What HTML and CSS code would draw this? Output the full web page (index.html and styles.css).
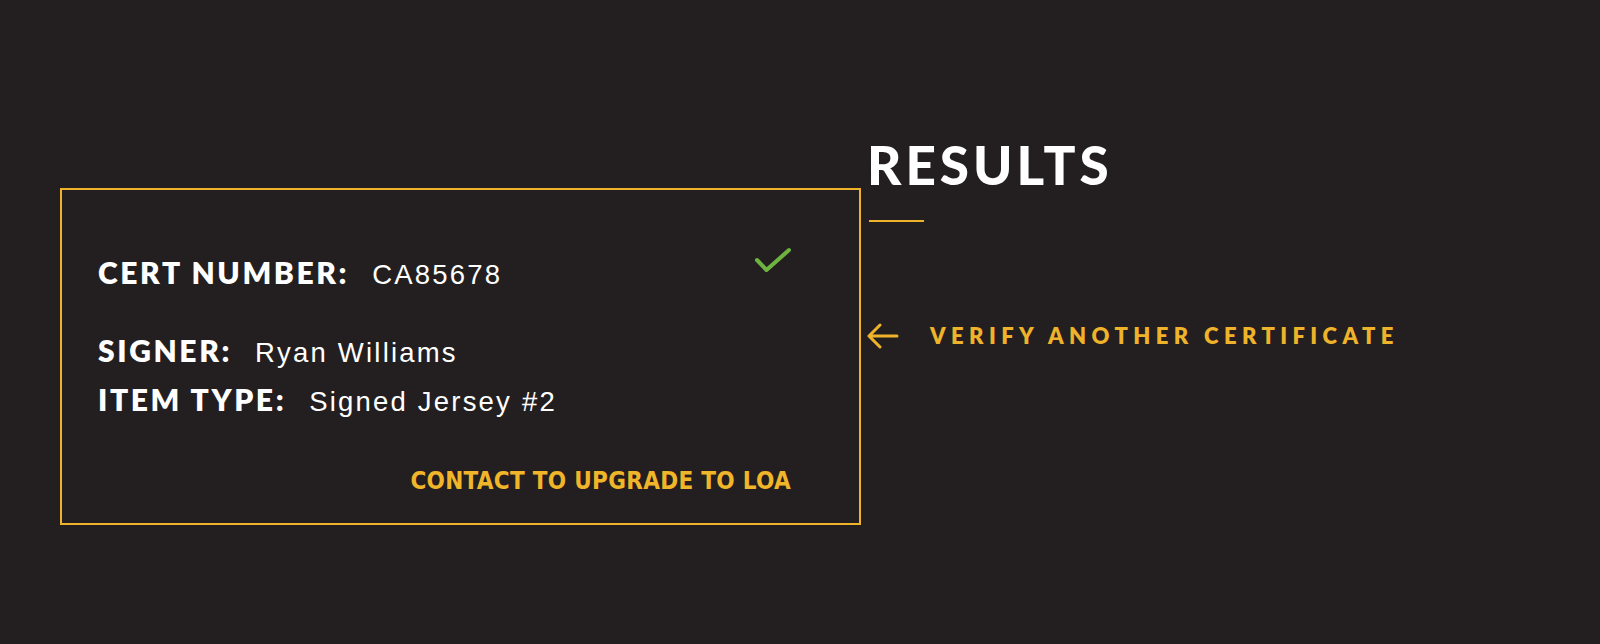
FILE: index.html
```html
<!DOCTYPE html>
<html lang="en">
<head>
<meta charset="utf-8">
<title>Results</title>
<link rel="stylesheet" href="styles.css">
</head>
<body>
<main class="page">
  <section class="card">
    <div class="row row-first">
      <div class="field">
        <span class="label">CERT NUMBER:</span>
        <span class="value">CA85678</span>
      </div>
      <svg class="check" width="38" height="28" viewBox="0 0 38 28" aria-hidden="true">
        <path d="M3 13 L12.5 23 L35 3" fill="none" stroke="#6db33f" stroke-width="4" stroke-linecap="round" stroke-linejoin="round"/>
      </svg>
    </div>
    <div class="row">
      <div class="field">
        <span class="label">SIGNER:</span>
        <span class="value">Ryan Williams</span>
      </div>
    </div>
    <div class="row">
      <div class="field">
        <span class="label">ITEM TYPE:</span>
        <span class="value">Signed Jersey #2</span>
      </div>
    </div>
    <div class="actions">
      <a class="contact" href="#">CONTACT TO UPGRADE TO LOA</a>
    </div>
  </section>
  <aside class="side">
    <h1 class="title">RESULTS</h1>
    <div class="rule"></div>
    <a class="back" href="#">
      <svg class="arrow" width="32" height="26" viewBox="0 0 32 26" aria-hidden="true">
        <path d="M30 13 H3 M13 2 L2 13 L13 24" fill="none" stroke="#eeb32b" stroke-width="3" stroke-linecap="round" stroke-linejoin="round"/>
      </svg>
      <span class="back-text">VERIFY ANOTHER CERTIFICATE</span>
    </a>
  </aside>
</main>
</body>
</html>
```

FILE: styles.css
```css
html, body {
  margin: 0;
  padding: 0;
}
body {
  background: #231f20;
  width: 1600px;
  height: 644px;
  overflow: hidden;
  font-family: "Liberation Sans", Arial, sans-serif;
  color: #ffffff;
}
.page {
  display: flex;
  align-items: flex-start;
  padding-left: 60px;
}
.card {
  margin-top: 188px;
  width: 801px;
  height: 337px;
  box-sizing: border-box;
  border: 2px solid #eeb32b;
  padding: 58px 68px 0 36px;
  display: flex;
  flex-direction: column;
}
.row {
  display: flex;
  align-items: flex-start;
  justify-content: space-between;
  line-height: 49px;
  height: 49px;
}
.row-first {
  margin-bottom: 29px;
}
.field {
  display: flex;
  align-items: baseline;
  white-space: nowrap;
}
.label {
  font-family: Lato, "Liberation Sans", sans-serif;
  font-weight: 800;
  font-size: 30px;
  letter-spacing: 2.6px;
  margin-right: 23px;
}
.value {
  font-family: "Liberation Sans", Arial, sans-serif;
  font-size: 27.5px;
  letter-spacing: 2.2px;
}
.check {
  margin-top: -1px;
  margin-right: -1px;
}
.actions {
  display: flex;
  justify-content: flex-end;
  margin-top: 42px;
}
.contact {
  font-family: "DejaVu Sans Condensed", "DejaVu Sans", sans-serif;
  font-weight: 700;
  font-size: 24px;
  color: #f1b52a;
  text-decoration: none;
  letter-spacing: 0.3px;
  line-height: 30px;
}
.side {
  padding-top: 133px;
  padding-left: 6px;
  display: flex;
  flex-direction: column;
  align-items: flex-start;
}
.title {
  margin: 0;
  font-family: Lato, "Liberation Sans", sans-serif;
  font-weight: 900;
  font-size: 53px;
  line-height: 64px;
  letter-spacing: 4px;
  color: #ffffff;
}
.rule {
  width: 55px;
  height: 2px;
  background: #eeb32b;
  margin-top: 23px;
  margin-left: 2px;
}
.back {
  display: flex;
  align-items: center;
  margin-top: 100px;
  text-decoration: none;
}
.arrow {
  margin-right: 31px;
}
.back-text {
  font-family: Lato, "Liberation Sans", sans-serif;
  font-weight: 800;
  font-size: 22px;
  letter-spacing: 5.4px;
  color: #eeb32b;
}
```
